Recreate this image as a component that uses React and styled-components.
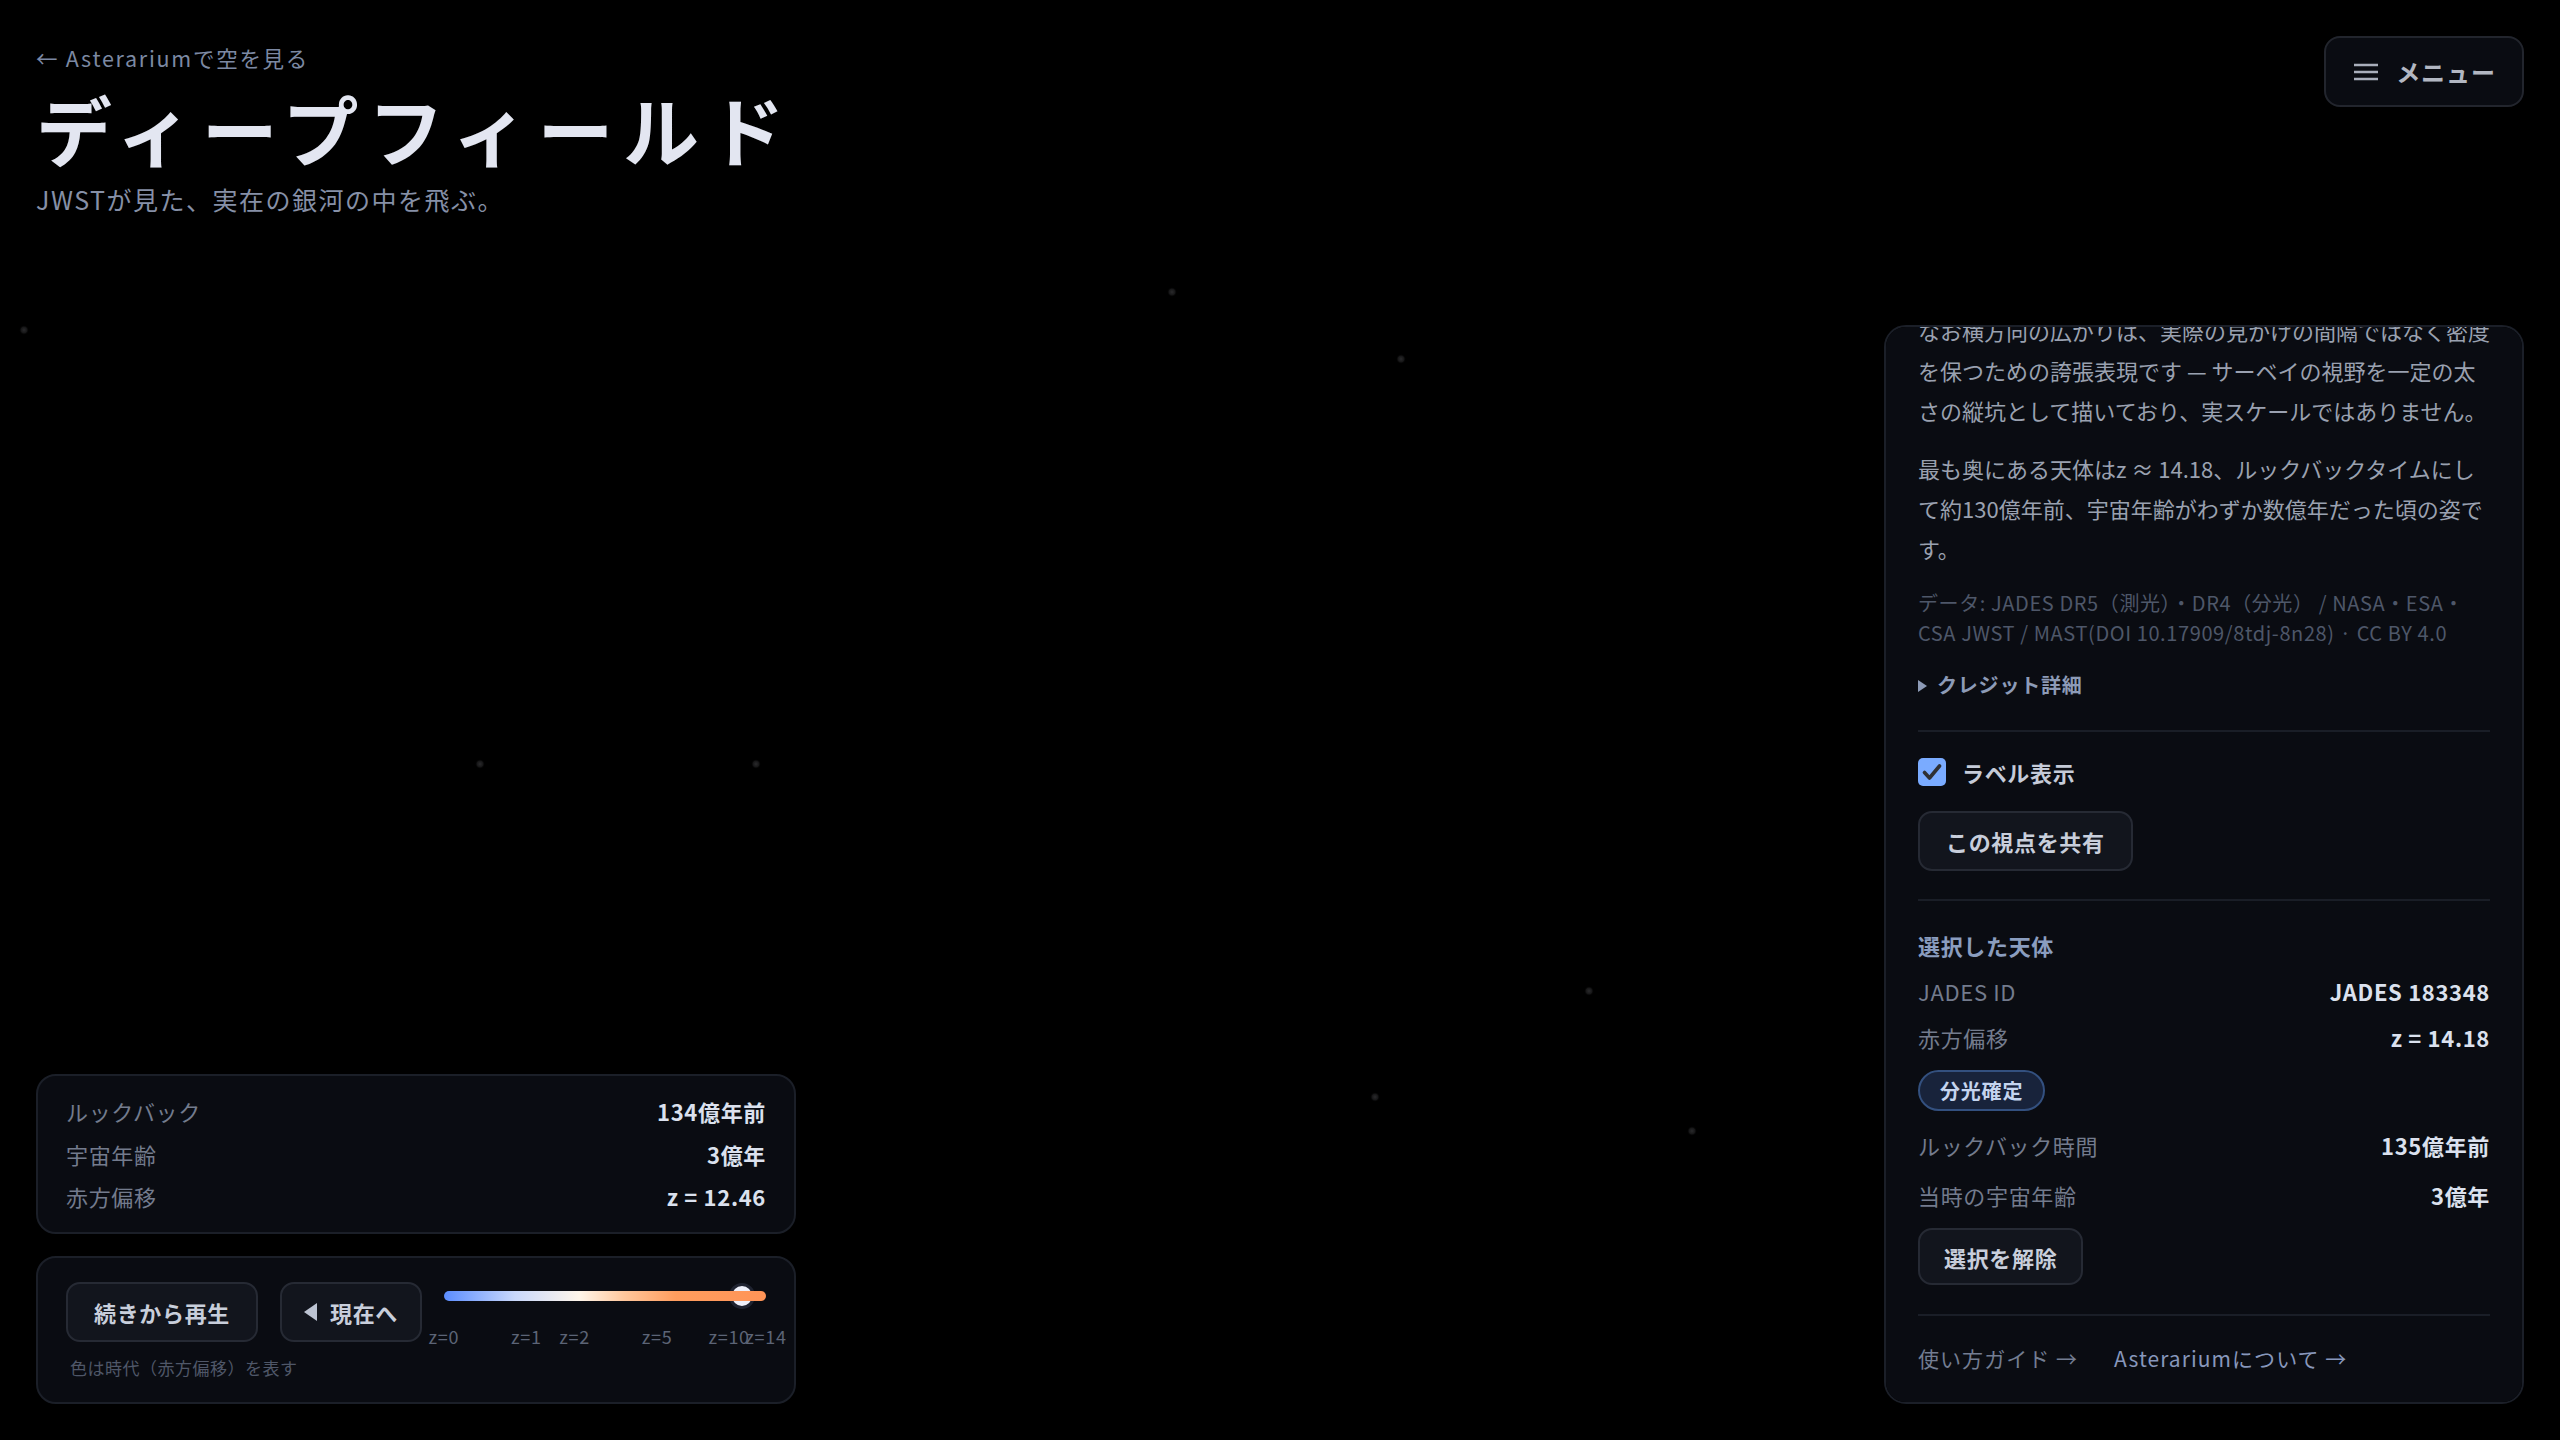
import { useLayoutEffect, useRef } from "react"
import styled, { createGlobalStyle } from "styled-components"

const GlobalStyle = createGlobalStyle`
  * { box-sizing: border-box; }
  html, body { margin: 0; background: #000; }
  body {
    font-family: "Noto Sans CJK JP", "Noto Sans", sans-serif;
    color: #dde3ef;
  }
`

// faint galaxies of the deep field behind the UI
const stars = [
  [24, 330, 5], [1172, 292, 5], [1401, 359, 5], [480, 764, 5],
  [756, 764, 5], [1589, 991, 5], [1375, 1097, 5], [1692, 1131, 5],
]

const ticks = [0, 1, 2, 5, 10, 14]
const zMax = 14
const zNow = 12.46
const logPos = (z) => Math.log(1 + z) / Math.log(1 + zMax)

const Scene = () => (
  <SkyLayer width="2560" height="1440" viewBox="0 0 2560 1440">
    <defs>
      <radialGradient id="glow">
        <stop offset="0%" stopColor="#2a2a2c" />
        <stop offset="60%" stopColor="#161617" />
        <stop offset="100%" stopColor="#000" stopOpacity="0" />
      </radialGradient>
    </defs>
    {stars.map(([x, y, r], i) => (
      <circle key={i} cx={x} cy={y} r={r} fill="url(#glow)" />
    ))}
  </SkyLayer>
)

const MenuIcon = () => (
  <svg width="24" height="18" viewBox="0 0 24 18">
    <path d="M0 2h24M0 9h24M0 16h24" stroke="#a9aebb" strokeWidth="2.4" />
  </svg>
)

const BackTriangle = () => (
  <svg width="14" height="18" viewBox="0 0 14 18">
    <polygon points="13,0 13,18 0,9" fill="#bcc3d2" />
  </svg>
)

const App = () => {
  const panelRef = useRef(null)

  useLayoutEffect(() => {
    // the panel is scrolled to its end
    if (panelRef.current) panelRef.current.scrollTop = panelRef.current.scrollHeight
  }, [])

  const thumbFrac = logPos(zNow)

  return (
    <>
      <GlobalStyle />
      <Page>
        <Scene />
        <LeftColumn>
          <Header>
            <BackLink href="#">← Asterariumで空を見る</BackLink>
            <Title>ディープフィールド</Title>
            <Subtitle>JWSTが見た、実在の銀河の中を飛ぶ。</Subtitle>
          </Header>

          <BottomStack>
            <Card $pad="20px 28px 21px">
              <InfoList>
                <InfoRow><Label>ルックバック</Label><Value>134億年前</Value></InfoRow>
                <InfoRow><Label>宇宙年齢</Label><Value>3億年</Value></InfoRow>
                <InfoRow><Label>赤方偏移</Label><Value>z = 12.46</Value></InfoRow>
              </InfoList>
            </Card>

            <Card $pad="24px 28px 22px">
              <ControlRow>
                <Button $h={60} $px={26}>続きから再生</Button>
                <Button $h={60} $px={22}><BackTriangle />現在へ</Button>
                <Slider>
                  <Thumb style={{ left: `calc(12px + ${thumbFrac} * (100% - 24px))` }} />
                  <Track />
                  {ticks.map((t) => (
                    <Tick key={t} style={{ left: `${logPos(t) * 100}%` }}>z={t}</Tick>
                  ))}
                </Slider>
              </ControlRow>
              <Caption>色は時代（赤方偏移）を表す</Caption>
            </Card>
          </BottomStack>
        </LeftColumn>

        <RightColumn>
          <MenuButton><MenuIcon />メニュー</MenuButton>

          <Panel ref={panelRef}>
            <Para $mt={28}>
              JADES（JWST Advanced Deep Extragalactic Survey）が観測したGOODS領域の銀河を、赤方偏移から求めた距離に沿って奥行き方向へ並べています。色は赤方偏移、つまり光が出た時代を表します。
            </Para>
            <Para $mt={18}>
              なお横方向の広がりは、実際の見かけの間隔ではなく密度を保つための誇張表現です — サーベイの視野を一定の太さの縦坑として描いており、実スケールではありません。
            </Para>
            <Para $mt={18}>
              最も奥にある天体はz ≈ 14.18、ルックバックタイムにして約130億年前、宇宙年齢がわずか数億年だった頃の姿です。
            </Para>
            <DataNote>
              データ: JADES DR5（測光）・DR4（分光） / NASA・ESA・CSA JWST / MAST(DOI 10.17909/8tdj-8n28) · CC BY 4.0
            </DataNote>
            <Credits>
              <summary>クレジット詳細</summary>
            </Credits>

            <Divider $mt={30} />

            <CheckRow>
              <CheckBox>
                <svg width="20" height="18" viewBox="0 0 20 18">
                  <path d="M2.5 9.5l5 5.5L17.5 3" fill="none" stroke="#2f3033" strokeWidth="3.6" strokeLinecap="round" strokeLinejoin="round" />
                </svg>
              </CheckBox>
              ラベル表示
            </CheckRow>
            <Button $h={60} $px={26} $mt={24}>この視点を共有</Button>

            <Divider $mt={28} />

            <SectionTitle>選択した天体</SectionTitle>
            <DetailRow $mt={16}><Label>JADES ID</Label><Value>JADES 183348</Value></DetailRow>
            <DetailRow $mt={16}><Label>赤方偏移</Label><Value>z = 14.18</Value></DetailRow>
            <Badge>分光確定</Badge>
            <DetailRow $mt={19}><Label>ルックバック時間</Label><Value>135億年前</Value></DetailRow>
            <DetailRow $mt={20}><Label>当時の宇宙年齢</Label><Value>3億年</Value></DetailRow>
            <Button $h={57} $px={24} $mt={18}>選択を解除</Button>

            <Divider $mt={29} />

            <Links>
              <FootLink href="#">使い方ガイド →</FootLink>
              <FootLink href="#" $accent>Asterariumについて →</FootLink>
            </Links>
          </Panel>
        </RightColumn>
      </Page>
    </>
  )
}

const Page = styled.div`
  position: relative;
  height: 100vh;
  overflow: hidden;
  padding: 36px;
  display: grid;
  grid-template-columns: 1fr 640px;
  gap: 36px;
  background: #000;
`

const SkyLayer = styled.svg`
  position: absolute;
  inset: 0;
  z-index: 0;
  pointer-events: none;
`

const LeftColumn = styled.div`
  position: relative;
  z-index: 1;
  display: flex;
  flex-direction: column;
  justify-content: space-between;
  min-height: 0;
`

const Header = styled.header`
  display: flex;
  flex-direction: column;
  align-items: flex-start;
  padding-top: 8px;
`

const BackLink = styled.a`
  font-size: 21.5px;
  line-height: 28px;
  letter-spacing: 0.08em;
  color: #7c89a3;
  text-decoration: none;
`

const Title = styled.h1`
  margin: 14px 0 0;
  font-size: 76px;
  line-height: 84px;
  font-weight: 700;
  letter-spacing: 0.125em;
  color: #e3e6f1;
`

const Subtitle = styled.p`
  margin: 12px 0 0;
  font-size: 25px;
  line-height: 34px;
  letter-spacing: 0.06em;
  color: #8690a7;
`

const BottomStack = styled.div`
  width: 760px;
  display: flex;
  flex-direction: column;
  gap: 22px;
`

const Card = styled.div`
  background: #0a0c12;
  border: 2px solid #1b1f28;
  border-radius: 20px;
  padding: ${(p) => p.$pad};
`

const InfoList = styled.div`
  display: flex;
  flex-direction: column;
  gap: 12.5px;
`

const InfoRow = styled.div`
  display: flex;
  justify-content: space-between;
  align-items: center;
  height: 30px;
  font-size: 22px;
`

const Label = styled.span`
  color: #737b8d;
  letter-spacing: 0.03em;
`

const Value = styled.span`
  font-weight: 700;
  color: #dbe1ee;
  letter-spacing: 0.03em;
`

const ControlRow = styled.div`
  display: flex;
  align-items: flex-start;
  gap: 22px;
`

const Button = styled.button`
  flex-shrink: 0;
  display: inline-flex;
  align-items: center;
  gap: 12px;
  align-self: flex-start;
  height: ${(p) => p.$h}px;
  padding: 0 ${(p) => p.$px}px;
  margin-top: ${(p) => p.$mt || 0}px;
  background: #12151d;
  border: 2px solid #262a34;
  border-radius: 14px;
  font-family: inherit;
  font-size: 22px;
  font-weight: 700;
  color: #c8cedb;
  letter-spacing: 0.03em;
  white-space: nowrap;
  cursor: pointer;
`

const Slider = styled.div`
  position: relative;
  flex: 1;
  height: 60px;
`

const Track = styled.div`
  position: absolute;
  left: 0;
  right: 0;
  top: 9px;
  height: 10px;
  border-radius: 5px;
  z-index: 2;
  background: linear-gradient(90deg, #5b8dff 0%, #c9d8fb 22%, #fff6ea 42%, #ffc79c 56%, #ff9d5e 72%, #ff9457 100%);
`

const Thumb = styled.div`
  position: absolute;
  top: 14px;
  width: 26px;
  height: 26px;
  margin: -13px 0 0 -13px;
  border-radius: 50%;
  background: #eef0fa;
  border: 3px solid #1f2330;
  z-index: 1;
`

const Tick = styled.span`
  position: absolute;
  top: 44px;
  transform: translateX(-50%);
  font-size: 18px;
  line-height: 20px;
  letter-spacing: 0.04em;
  color: #5c6476;
  white-space: nowrap;
`

const Caption = styled.p`
  margin: 14px 0 0 4px;
  font-size: 17px;
  line-height: 24px;
  letter-spacing: 0.03em;
  color: #4f5768;
`

const RightColumn = styled.div`
  position: relative;
  z-index: 1;
  display: flex;
  flex-direction: column;
  align-items: flex-end;
  justify-content: space-between;
  min-height: 0;
`

const MenuButton = styled.button`
  display: flex;
  align-items: center;
  gap: 18px;
  height: 71px;
  padding: 0 26px 0 28px;
  background: #0a0c12;
  border: 2px solid #22252d;
  border-radius: 16px;
  font-family: inherit;
  font-size: 24px;
  font-weight: 700;
  color: #b2b7c2;
  letter-spacing: 0.04em;
  cursor: pointer;
`

const Panel = styled.aside`
  position: relative;
  width: 640px;
  height: 1079px;
  overflow-y: auto;
  scrollbar-width: none;
  background: #0a0c12;
  border: 2px solid #1b1f28;
  border-radius: 22px;
  padding: 0 32px 29px;
  display: flex;
  flex-direction: column;
  &::-webkit-scrollbar { display: none; }
`

const Para = styled.p`
  margin: ${(p) => p.$mt}px 0 0;
  font-size: 22px;
  line-height: 40px;
  color: #9aa1b0;
  flex-shrink: 0;
`

const DataNote = styled.p`
  margin: 19.5px 0 0;
  font-size: 20px;
  line-height: 30px;
  letter-spacing: 0.03em;
  color: #4e5769;
  flex-shrink: 0;
`

const Credits = styled.details`
  margin-top: 22.5px;
  flex-shrink: 0;
  summary {
    list-style: none;
    font-size: 20px;
    line-height: 30px;
    font-weight: 700;
    color: #8d9bb7;
    letter-spacing: 0.04em;
    cursor: pointer;
  }
  summary::before {
    content: "";
    display: inline-block;
    width: 0;
    height: 0;
    border-left: 9px solid #8d9bb7;
    border-top: 6px solid transparent;
    border-bottom: 6px solid transparent;
    margin-right: 10px;
    vertical-align: 1px;
  }
  summary::-webkit-details-marker { display: none; }
`

const Divider = styled.hr`
  flex-shrink: 0;
  margin: ${(p) => p.$mt}px 0 0;
  border: 0;
  height: 2px;
  background: #1a1e27;
`

const CheckRow = styled.label`
  flex-shrink: 0;
  display: flex;
  align-items: center;
  gap: 16px;
  height: 30px;
  margin-top: 25px;
  font-size: 22px;
  font-weight: 700;
  color: #c5cbd8;
  letter-spacing: 0.03em;
`

const CheckBox = styled.span`
  display: grid;
  place-items: center;
  width: 28px;
  height: 28px;
  border-radius: 5px;
  background: #7aabff;
`

const SectionTitle = styled.h3`
  flex-shrink: 0;
  margin: 29px 0 0;
  font-size: 22px;
  line-height: 30px;
  font-weight: 700;
  color: #8a9dbf;
  letter-spacing: 0.03em;
`

const DetailRow = styled(InfoRow)`
  flex-shrink: 0;
  margin-top: ${(p) => p.$mt}px;
`

const Badge = styled.span`
  flex-shrink: 0;
  align-self: flex-start;
  margin-top: 18px;
  height: 41px;
  padding: 0 20px;
  display: inline-flex;
  align-items: center;
  border-radius: 999px;
  background: #18233b;
  border: 2px solid #33507f;
  font-size: 20px;
  font-weight: 700;
  color: #c4d4ef;
  letter-spacing: 0.04em;
`

const Links = styled.div`
  flex-shrink: 0;
  display: flex;
  gap: 36px;
  margin-top: 27px;
  height: 30px;
  align-items: center;
`

const FootLink = styled.a`
  font-size: 21px;
  letter-spacing: 0.05em;
  text-decoration: none;
  color: ${(p) => (p.$accent ? "#8797bb" : "#737d92")};
`

export default App
